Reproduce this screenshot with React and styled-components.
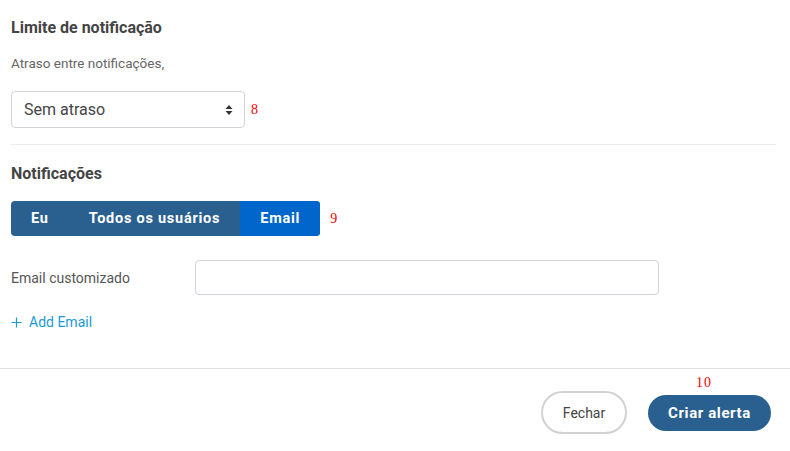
import React, { useState } from 'react';
import styled, { createGlobalStyle } from 'styled-components';

const GlobalStyle = createGlobalStyle`
  body {
    margin: 0;
    background: #fff;
    font-family: Roboto, "Liberation Sans", sans-serif;
  }
`;

const Page = styled.div`
  width: 790px;
  height: 451px;
  display: flex;
  flex-direction: column;
  overflow: hidden;
`;

const Body = styled.div`
  padding: 0 14px 0 11px;
  display: flex;
  flex-direction: column;
`;

const Section = styled.section`
  display: flex;
  flex-direction: column;
  padding-top: ${p => p.$top}px;
`;

const Title = styled.h3`
  margin: 0;
  font-size: 16px;
  font-weight: 700;
  color: #444;
  line-height: 18px;
`;

const Hint = styled.p`
  margin: 18px 0 0;
  font-size: 13.5px;
  color: #666;
  line-height: 16px;
`;

const Row = styled.div`
  display: flex;
  align-items: center;
  gap: ${p => p.$gap || 0}px;
  margin-top: ${p => p.$top || 0}px;
`;

const SelectBox = styled.div`
  width: 234px;
  height: 37px;
  box-sizing: border-box;
  border: 1px solid #d0d3d8;
  border-radius: 4px;
  display: flex;
  align-items: center;
  justify-content: space-between;
  padding: 0 11px 0 12px;
  font-size: 16px;
  color: #444;
`;

const Marker = styled.span`
  font-family: "Liberation Serif", serif;
  font-size: 14px;
  color: #f00;
  letter-spacing: 1px;
`;

const Divider = styled.hr`
  margin: 16px 0 0;
  border: 0;
  border-top: 1px solid #ececec;
`;

const Segmented = styled.div`
  display: flex;
  height: 35px;
  border-radius: 4px;
  overflow: hidden;
  background: #2a6090;
`;

const Segment = styled.button`
  border: 0;
  padding: 0 20px;
  background: ${p => (p.$active ? '#0066cc' : 'transparent')};
  color: #fff;
  font-family: Roboto, "Liberation Sans", sans-serif;
  font-size: 14.5px;
  font-weight: 700;
  letter-spacing: 0.75px;
  cursor: pointer;
`;

const Label = styled.label`
  width: 184px;
  font-size: 14px;
  color: #555;
`;

const TextInput = styled.input`
  width: 464px;
  height: 35px;
  box-sizing: border-box;
  border: 1px solid #d0d3d8;
  border-radius: 4px;
  outline: none;
`;

const AddLink = styled.a`
  display: flex;
  align-items: center;
  gap: 7px;
  margin-top: 19px;
  font-size: 14px;
  line-height: 16px;
  color: #1a9ad6;
  cursor: pointer;
`;

const Footer = styled.footer`
  margin-top: 38px;
  border-top: 1px solid #dedede;
  display: flex;
  justify-content: flex-end;
  align-items: center;
  gap: 21px;
  padding: 22px 19px 0 0;
`;

const GhostButton = styled.button`
  width: 86px;
  height: 43px;
  border: 2px solid #d2d2d2;
  border-radius: 22px;
  background: #fff;
  color: #444;
  font-family: Roboto, "Liberation Sans", sans-serif;
  font-size: 14px;
`;

const PrimaryWrap = styled.div`
  position: relative;
`;

const PrimaryButton = styled.button`
  width: 123px;
  height: 36px;
  border: 0;
  border-radius: 18px;
  background: #2a6090;
  color: #fff;
  font-family: Roboto, "Liberation Sans", sans-serif;
  font-size: 15px;
  font-weight: 700;
  letter-spacing: 0.6px;
`;

const FloatMarker = styled(Marker)`
  position: absolute;
  left: 48px;
  top: -20px;
`;

const Caret = () => (
  <svg width="8" height="12" viewBox="0 0 8 12">
    <path d="M4 1 L7.5 5 H0.5 Z M4 11 L0.5 7 H7.5 Z" fill="#333" />
  </svg>
);

const Plus = () => (
  <svg width="11" height="11" viewBox="0 0 11 11">
    <path d="M5.5 0.5 V10.5 M0.5 5.5 H10.5" stroke="#1a9ad6" strokeWidth="1.2" />
  </svg>
);

export default function App() {
  const [target, setTarget] = useState('email');
  const options = [
    ['me', 'Eu'],
    ['all', 'Todos os usuários'],
    ['email', 'Email'],
  ];

  return (
    <Page>
      <GlobalStyle />
      <Body>
        <Section $top={19}>
          <Title>Limite de notificação</Title>
          <Hint>Atraso entre notificações,</Hint>
          <Row $top={20} $gap={6}>
            <SelectBox>
              Sem atraso
              <Caret />
            </SelectBox>
            <Marker>8</Marker>
          </Row>
        </Section>
        <Divider />
        <Section $top={20}>
          <Title>Notificações</Title>
          <Row $top={18} $gap={10}>
            <Segmented>
              {options.map(([key, text]) => (
                <Segment key={key} $active={target === key} onClick={() => setTarget(key)}>
                  {text}
                </Segment>
              ))}
            </Segmented>
            <Marker>9</Marker>
          </Row>
          <Row $top={24}>
            <Label>Email customizado</Label>
            <TextInput />
          </Row>
          <AddLink>
            <Plus />
            Add Email
          </AddLink>
        </Section>
      </Body>
      <Footer>
        <GhostButton>Fechar</GhostButton>
        <PrimaryWrap>
          <FloatMarker>10</FloatMarker>
          <PrimaryButton>Criar alerta</PrimaryButton>
        </PrimaryWrap>
      </Footer>
    </Page>
  );
}
